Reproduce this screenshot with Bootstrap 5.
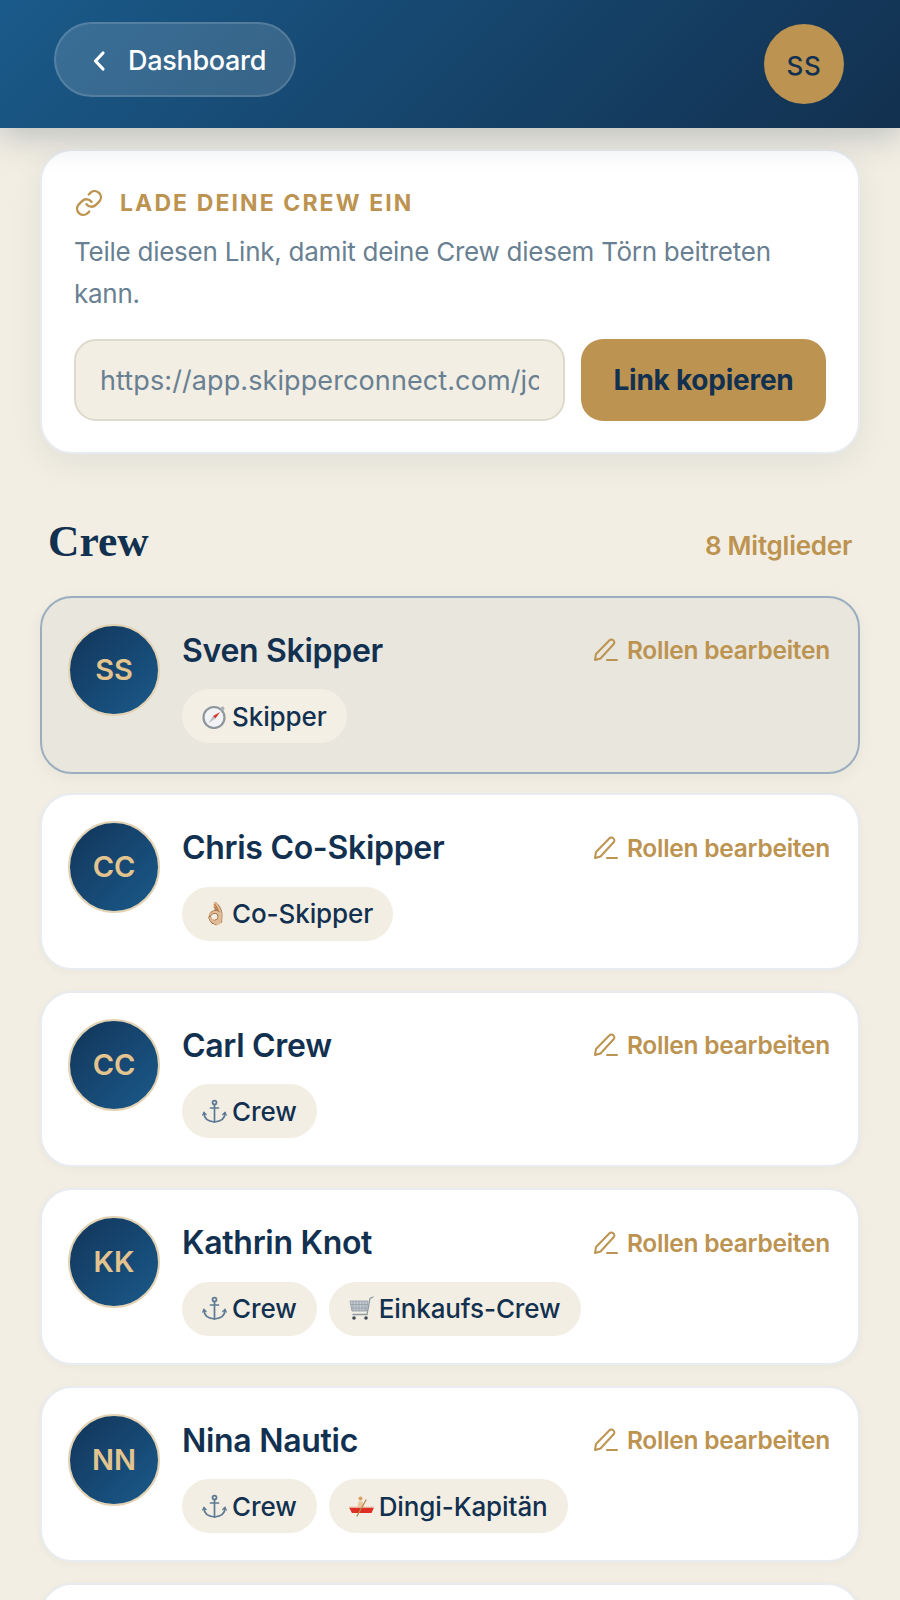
<!doctype html>
<html lang="de"><head><meta charset="utf-8"><title>Crew</title>
<link href="https://cdn.jsdelivr.net/npm/bootstrap@5.3.0/dist/css/bootstrap.min.css" rel="stylesheet">
<style>
html,body{height:1600px;overflow:hidden}
body{background:#f2eee3;font-family:Inter,"Noto Sans",sans-serif;color:#12304f}
.topbar{height:128px;background:linear-gradient(135deg,#1a5a8a 0%,#12304f 100%);box-shadow:0 8px 32px rgba(18,48,79,.25);padding:22px 56px 0 54px;position:relative;z-index:2}
.backbtn{height:75px;width:242px;border-radius:38px;background:rgba(255,255,255,.14);border:2px solid rgba(255,255,255,.14);color:#fff;font-size:27px;font-weight:500;letter-spacing:-.3px;padding:3px 0 0 36px;gap:22px}
.ava-top{width:80px;height:80px;background:#bc9350;color:#12304f;font-size:26px;font-weight:500;letter-spacing:.8px;margin-top:2px;padding-top:2px}
.invite{margin:21px 40px 0;height:305px;border-radius:32px;background:#fff;border:2px solid #e8ebef;padding:33px 32px 0;box-shadow:0 8px 32px rgba(18,48,79,.08)}
.invite-h{color:#bc9350;font-size:23px;font-weight:700;letter-spacing:2.1px;gap:16px;height:38px}
.invite-h svg{flex:none}
.invite-p{color:#697f92;font-size:26px;line-height:42px;letter-spacing:-.25px;margin:9px 0 24px}
.linkinput{flex:1 1 0;min-width:0;height:82px;background:#f2eee3;border:2px solid #ddd9cd;border-radius:22px;color:#697f92;font-size:27px;letter-spacing:.1px;padding:0 24px;font-family:inherit}
.linkinput:focus{outline:0}
.copybtn{width:245px;height:82px;background:#bc9350;border:0;border-radius:22px;color:#12304f;font-size:28px;font-weight:700;letter-spacing:-.25px}
.crewhead{margin:52px 48px 0;height:70px}
.crewtitle{font-family:"Liberation Serif",serif;font-size:43.500px;font-weight:700;margin:0;color:#12304f}
.crewcount{color:#bc9350;font-size:26px;font-weight:600;margin-top:8px;letter-spacing:-.25px}
.memberlist{margin:19.500px 40px 0;gap:21px}
.member{background:#fff;border:2px solid #e8ebef;border-radius:32px;height:176.500px;padding:26px;box-shadow:0 2px 8px rgba(18,48,79,.04)}
.member.own{background:#e9e6de;border-color:#9baebf;box-shadow:0 4px 16px rgba(18,48,79,.05);height:178.500px;margin-bottom:-2px}
.ava{width:92px;height:92px;flex:none;background:linear-gradient(135deg,#12355a,#1a5a8a);border:2px solid #e3d3b5;color:#e3c48f;font-size:29px;font-weight:600}
.mbody{margin:0 2px 0 22px;min-width:0}
.mname{font-size:32px;font-weight:600;line-height:46px;letter-spacing:-.3px;margin-top:4px}
.edit{color:#bc9350;font-size:24.500px;font-weight:600;letter-spacing:-.25px;gap:8px;line-height:46px;margin-top:3px}
.chips{gap:12px;margin-top:15.500px}
.chip{height:54px;border-radius:27px;background:#f2eee3;font-size:26px;font-weight:500;padding:0 20px;gap:5px;letter-spacing:-.1px;display:inline-flex;align-items:center}
.chip svg{flex:none}
.own .chip{background:#f3efe5}
.emo{font-family:"Noto Color Emoji","Noto Sans",sans-serif;font-size:22px;line-height:1;display:inline-block;width:25px;text-align:center;letter-spacing:0}
</style></head><body>
<header class="topbar d-flex justify-content-between align-items-start">
<a class="backbtn d-flex align-items-center text-decoration-none"><svg width="14" height="22" viewBox="0 0 14 22" fill="none" stroke="#fff" stroke-width="3.2" stroke-linecap="round" stroke-linejoin="round"><path d="M11 3 3.500 11 11 19"/></svg><span>Dashboard</span></a>
<div class="ava-top rounded-circle d-flex align-items-center justify-content-center">SS</div>
</header>
<section class="invite">
<div class="invite-h d-flex align-items-center"><svg width="30" height="30" viewBox="0 0 24 24" fill="none" stroke="#bc9350" stroke-width="1.900" stroke-linecap="round" stroke-linejoin="round"><path d="M10 13a5 5 0 0 0 7.500.5l3-3a5 5 0 0 0-7-7l-1.700 1.700"/><path d="M14 11a5 5 0 0 0-7.500-.5l-3 3a5 5 0 0 0 7 7l1.700-1.700"/></svg><span>LADE DEINE CREW EIN</span></div>
<p class="invite-p">Teile diesen Link, damit deine Crew diesem Törn beitreten kann.</p>
<div class="d-flex gap-3"><input class="linkinput" readonly value="https://app.skipperconnect.com/join/3f9a2c"><button class="copybtn">Link kopieren</button></div>
</section>
<div class="crewhead d-flex justify-content-between align-items-center"><h2 class="crewtitle">Crew</h2><span class="crewcount">8 Mitglieder</span></div>
<div class="memberlist d-flex flex-column" id="list"></div>
<script>
const pen='<svg width="26" height="26" viewBox="0 0 26 26" fill="none" stroke="#bc9350" stroke-width="2" stroke-linecap="round" stroke-linejoin="round"><path d="M2 23l1-6L16.500 3.200a2.600 2.600 0 0 1 3.700 0l.4.4a2.600 2.600 0 0 1 0 3.700L7.500 21.500z"/><path d="M14 23h10"/></svg>';
const compass='<svg role="img" aria-label="🧭" width="25" height="25" viewBox="0 0 25 25"><circle cx="12" cy="13.500" r="10.500" fill="#f1f3f4" stroke="#8d969e" stroke-width="2.200"/><circle cx="20.500" cy="4.500" r="2" fill="#aab2b9"/><path d="M6.500 19 11 12l2.500 2.500z" fill="#b9c0c6"/><path d="M18 8l-7 4 2.500 2.500z" fill="#d8392b"/></svg>';
const anchor='<svg role="img" aria-label="⚓" width="25" height="25" viewBox="0 0 25 25" fill="none" stroke="#5d7a94" stroke-width="1.700" stroke-linecap="round"><circle cx="12.500" cy="3.600" r="2"/><path d="M12.500 5.600V23M8.500 9h8"/><path d="M2 14c0 6 5 8.500 10.500 9 5.500-.5 10.500-3 10.500-9"/><path d="M.8 16 2 13.500l2 2M20.800 15.500l2.200-2 1.200 2.500" stroke-width="1.400"/></svg>';
const cart='<svg role="img" aria-label="🛒" width="25" height="25" viewBox="0 0 25 25" fill="none"><path d="M1 5h18l-1.500 10H3z" fill="#c3cad0" stroke="#8f9aa3" stroke-width=".8"/><path d="M4 5v10M7 5v10M10 5v10M13 5v10M16 5v10M1.500 8.500h17M2 12h16" stroke="#8f9aa3" stroke-width=".7"/><path d="M24 1l-3 1.500L18 18.500H4" stroke="#8f9aa3" stroke-width="1.300" stroke-linecap="round"/><circle cx="5" cy="22" r="1.800" fill="#3f4a55"/><circle cx="17" cy="22" r="1.800" fill="#3f4a55"/></svg>';
const boat='<svg role="img" aria-label="🚣" width="25" height="25" viewBox="0 0 25 25"><path d="M0 13.500h25l-2.500 5.500H3z" fill="#dc2f26"/><path d="M0 13h25" stroke="#f0c8b0" stroke-width="1"/><circle cx="11.500" cy="4.500" r="2" fill="#d9a05f"/><path d="M9.500 7.500h4l1 5.500H8.500z" fill="#e8c79b"/><path d="M17 6 8 22" stroke="#b8894a" stroke-width="1.300" stroke-linecap="round"/></svg>';
const hand='<span class="emo">👌🏼</span>';
const m=[["SS","Sven Skipper",[[compass,"Skipper"]],1],["CC","Chris Co-Skipper",[[hand,"Co-Skipper"]]],["CC","Carl Crew",[[anchor,"Crew"]]],["KK","Kathrin Knot",[[anchor,"Crew"],[cart,"Einkaufs-Crew"]]],["NN","Nina Nautic",[[anchor,"Crew"],[boat,"Dingi-Kapitän"]]]];
document.getElementById('list').innerHTML=m.map(x=>`<article class="member d-flex ${x[3]?'own':''}"><div class="ava rounded-circle d-flex align-items-center justify-content-center">${x[0]}</div><div class="mbody flex-grow-1"><div class="d-flex justify-content-between"><div class="mname">${x[1]}</div><div class="edit d-flex align-items-center">${pen}<span>Rollen bearbeiten</span></div></div><div class="chips d-flex">${x[2].map(c=>`<span class="chip">${c[0]}${c[1]}</span>`).join('')}</div></div></article>`).join('')+'<article class="member"></article>';
</script>
</body></html>
